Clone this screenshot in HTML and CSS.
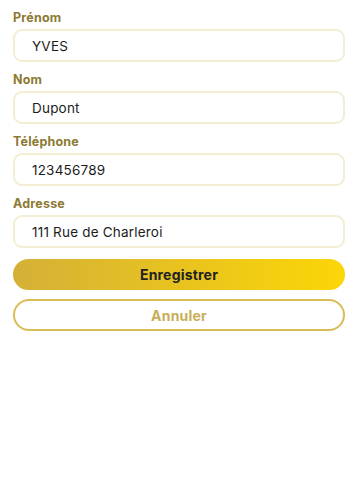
FILE: index.html
```html
<!doctype html>
<html lang="fr">
<head>
  <meta charset="UTF-8" />
  <meta name="viewport" content="width=device-width, initial-scale=1.0" />
  <title>Profil</title>
  <link rel="stylesheet" href="styles.css">
</head>
<body>

<section class="wrapper">
  <form class="form">
    <div class="field">
      <label class="field-label" for="prenom">Prénom</label>
      <input class="field-input" id="prenom" type="text" value="YVES" />
    </div>
    <div class="field">
      <label class="field-label" for="nom">Nom</label>
      <input class="field-input" id="nom" type="text" value="Dupont" />
    </div>
    <div class="field">
      <label class="field-label" for="tel">Téléphone</label>
      <input class="field-input" id="tel" type="tel" value="123456789" />
    </div>
    <div class="field">
      <label class="field-label" for="adresse">Adresse</label>
      <input class="field-input" id="adresse" type="text" value="111 Rue de Charleroi" />
    </div>
    <div class="actions">
      <button type="submit" class="btn btn-save">Enregistrer</button>
      <button type="button" class="btn btn-cancel">Annuler</button>
    </div>
  </form>
</section>

</body>
</html>
```

FILE: styles.css
```css
html, body {
  margin: 0;
  padding: 0;
  background: #fff;
}
* {
  box-sizing: border-box;
}
body {
  font-family: Inter, Roboto, "Liberation Sans", sans-serif;
}
.wrapper {
  padding: 11px 15px 0 13px;
}
.form {
  display: flex;
  flex-direction: column;
  gap: 11px;
}
.field {
  display: flex;
  flex-direction: column;
  gap: 4px;
}
.field-label {
  font-size: 12.5px;
  font-weight: 700;
  line-height: 14px;
  color: #8c7a32;
  letter-spacing: 0.2px;
}
.field-input {
  height: 33px;
  width: 100%;
  padding: 0 17px;
  border: 2px solid #f3edd4;
  border-radius: 9px;
  font-family: inherit;
  font-size: 13.5px;
  color: #1c1c1c;
  letter-spacing: 0.2px;
  background: #fff;
  outline: none;
}
.actions {
  display: flex;
  flex-direction: column;
  gap: 9px;
}
.btn {
  height: 31px;
  width: 100%;
  border-radius: 16px;
  font-family: inherit;
  font-size: 14px;
  font-weight: 700;
  letter-spacing: 0.2px;
  cursor: pointer;
  outline: none;
}
.btn-save {
  border: none;
  background: linear-gradient(90deg, #d4b038, #fcd606);
  color: #222;
}
.btn-cancel {
  height: 32px;
  border: 2px solid #d9bc58;
  background: #fff;
  color: #c9ae5a;
}
```
